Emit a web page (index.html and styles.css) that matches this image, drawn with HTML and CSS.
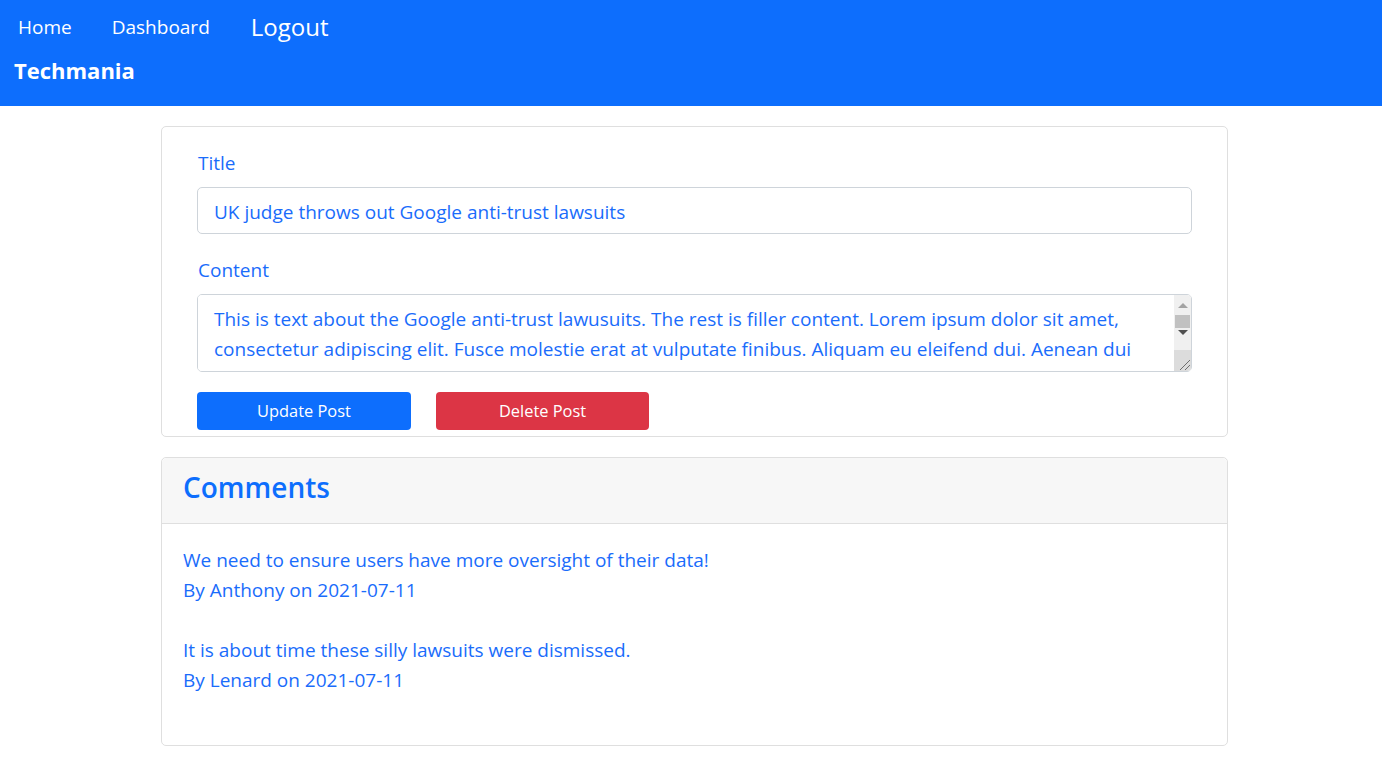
FILE: index.html
```html
<!DOCTYPE html>
<html lang="en">
<head>
<meta charset="utf-8">
<title>Techmania</title>
<link rel="stylesheet" href="styles.css">
</head>
<body>
<header class="navbar">
  <nav class="nav-links">
    <a class="nav-link" href="#">Home</a>
    <a class="nav-link" href="#">Dashboard</a>
    <a class="nav-link nav-logout" href="#">Logout</a>
  </nav>
  <div class="brand">Techmania</div>
</header>
<main class="main">
  <section class="card card-form">
    <div class="form-group">
      <label class="form-label" for="title">Title</label>
      <input class="form-input" id="title" type="text" value="UK judge throws out Google anti-trust lawsuits">
    </div>
    <div class="form-group form-group-last">
      <label class="form-label" for="content">Content</label>
      <div class="textarea-wrap">
        <textarea class="form-textarea" id="content">This is text about the Google anti-trust lawusuits. The rest is filler content. Lorem ipsum dolor sit amet, consectetur adipiscing elit. Fusce molestie erat at vulputate finibus. Aliquam eu eleifend dui. Aenean dui vestibulum, faucibus tellus vel, tincidunt neque. Sed tristique mauris nec arcu pellentesque, vitae gravida velit volutpat. Nulla facilisi. Curabitur ultricies lorem in ipsum congue, non dictum est pretium. Praesent elementum magna id metus blandit, sit amet tempor nisl vulputate.</textarea>
        <div class="scrollbar" aria-hidden="true">
          <div class="sb-btn sb-up"><span class="arrow-up"></span></div>
          <div class="sb-thumb"></div>
          <div class="sb-btn sb-down"><span class="arrow-down"></span></div>
          <div class="sb-track"></div>
          <div class="sb-corner">
            <svg width="17" height="21" viewBox="0 0 17 21">
              <line x1="6" y1="20" x2="16" y2="10" stroke="#6e6e6e" stroke-width="1"/>
              <line x1="11" y1="20" x2="16" y2="15" stroke="#6e6e6e" stroke-width="1"/>
            </svg>
          </div>
        </div>
      </div>
    </div>
    <div class="actions">
      <button class="btn btn-primary" type="button">Update Post</button>
      <button class="btn btn-danger" type="button">Delete Post</button>
    </div>
  </section>
  <section class="card card-comments">
    <div class="card-header">
      <h2 class="card-title">Comments</h2>
    </div>
    <div class="card-body">
      <div class="comment">
        <div class="comment-text">We need to ensure users have more oversight of their data!</div>
        <div class="comment-meta">By Anthony on 2021-07-11</div>
      </div>
      <div class="comment">
        <div class="comment-text">It is about time these silly lawsuits were dismissed.</div>
        <div class="comment-meta">By Lenard on 2021-07-11</div>
      </div>
    </div>
  </section>
</main>
</body>
</html>
```
FILE: styles.css
```css
* { box-sizing: border-box; }

html, body {
  margin: 0;
  padding: 0;
  background: #ffffff;
}

body {
  font-family: "Open Sans", "Noto Sans", sans-serif;
  font-size: 19px;
  line-height: 30px;
  color: #1a6cfb;
}

/* Navbar */
.navbar {
  background: #0d6efd;
  height: 106px;
  display: flex;
  flex-direction: column;
}

.nav-links {
  display: flex;
  align-items: flex-start;
  padding-left: 18px;
  gap: 40px;
}

.nav-link {
  color: #ffffff;
  text-decoration: none;
  font-size: 19px;
  line-height: 30px;
  padding-top: 12px;
}

.nav-logout {
  font-size: 24px;
  line-height: 36px;
  padding-top: 9px;
  margin-left: 1px;
}

.brand {
  color: #ffffff;
  font-weight: 700;
  font-size: 22px;
  line-height: 30px;
  padding-left: 14px;
  margin-top: 10px;
}

/* Main */
.main {
  width: 1067px;
  margin: 20px 0 0 161px;
  display: flex;
  flex-direction: column;
  gap: 20px;
}

.card {
  border: 1px solid #dfdfdf;
  border-radius: 5px;
  background: #ffffff;
}

.card-form {
  padding: 21px 35px 6px;
}

.form-group {
  display: flex;
  flex-direction: column;
  margin-bottom: 21px;
}

.form-group-last {
  margin-bottom: 20px;
}

.form-label {
  display: block;
  line-height: 30px;
  margin-bottom: 9px;
  padding-left: 1px;
}

.form-input,
.form-textarea {
  font-family: "Open Sans", "Noto Sans", sans-serif;
  font-size: 19px;
  line-height: 30px;
  color: #1a6cfb;
  border: 1px solid #ced4da;
  border-radius: 5px;
  background: #ffffff;
  width: 100%;
  outline: none;
}

.form-input {
  height: 47px;
  padding: 9px 16px 6px;
}

.textarea-wrap {
  position: relative;
}

.form-textarea {
  display: block;
  height: 78px;
  padding: 9px 33px 7px 16px;
  resize: none;
  overflow-y: auto;
  scrollbar-width: none;
}

/* Fake classic scrollbar overlay on the textarea */
.scrollbar {
  position: absolute;
  top: 1px;
  right: 1px;
  bottom: 1px;
  width: 17px;
  background: #f0f0f0;
  display: flex;
  flex-direction: column;
  border-top-right-radius: 4px;
  border-bottom-right-radius: 4px;
  overflow: hidden;
}

.sb-btn {
  display: flex;
  align-items: center;
  justify-content: center;
}

.sb-up {
  height: 20px;
  padding-top: 1px;
}

.sb-down {
  height: 9px;
}

.arrow-up {
  width: 0;
  height: 0;
  border-left: 5px solid transparent;
  border-right: 5px solid transparent;
  border-bottom: 5px solid #a3a3a3;
}

.arrow-down {
  width: 0;
  height: 0;
  border-left: 5px solid transparent;
  border-right: 5px solid transparent;
  border-top: 5px solid #505050;
}

.sb-thumb {
  height: 13px;
  margin: 0 1px;
  background: #c1c1c1;
}

.sb-track {
  flex: 1;
}

.sb-corner {
  height: 21px;
  background: #dcdcdc;
  line-height: 0;
}

.actions {
  display: flex;
  gap: 25px;
}

.btn {
  font-family: "Open Sans", "Noto Sans", sans-serif;
  font-size: 16.4px;
  line-height: 24px;
  color: #ffffff;
  border: none;
  border-radius: 4px;
  height: 38px;
  padding: 7px 12px;
  cursor: pointer;
}

.btn-primary {
  background: #0d6efd;
  width: 214px;
}

.btn-danger {
  background: #dc3545;
  width: 213px;
}

/* Comments */
.card-header {
  background: #f7f7f7;
  border-bottom: 1px solid #dfdfdf;
  border-radius: 5px 5px 0 0;
  padding: 12px 21px 19px;
}

.card-title {
  margin: 0;
  font-size: 28px;
  line-height: 34px;
  font-weight: 600;
  color: #0d6efd;
}

.card-body {
  padding: 21px 21px 20px;
}

.comment {
  margin-bottom: 30px;
}

.comment-text,
.comment-meta {
  line-height: 30px;
}
```
